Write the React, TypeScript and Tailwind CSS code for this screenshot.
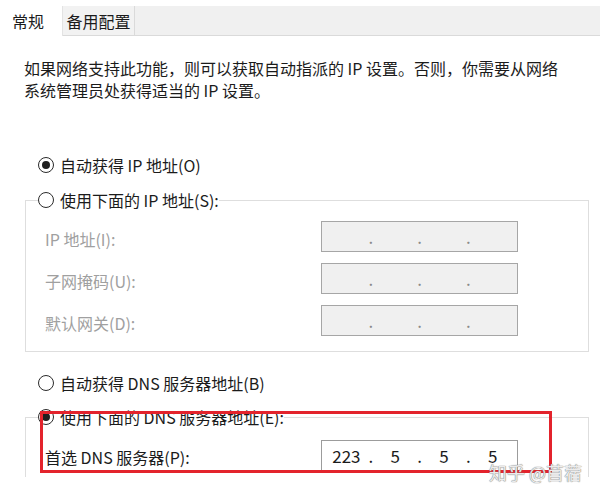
import React, { Fragment } from "react";

function Radio({ checked }: { checked?: boolean }) {
  return (
    <span className="w-[16px] h-[16px] rounded-full border border-[#2b2b2b] flex items-center justify-center bg-white shrink-0">
      {checked && <span className="w-[8px] h-[8px] rounded-full bg-[#1f1f1f]" />}
    </span>
  );
}

function RadioRow({ checked, label }: { checked?: boolean; label: string }) {
  return (
    <div className="flex items-center gap-[6px] h-[24px] text-[16px] leading-[24px] text-[#1b1b1b] bg-white">
      <Radio checked={checked} />
      <span>{label}</span>
    </div>
  );
}

function IpBox({ values, disabled }: { values?: string[]; disabled?: boolean }) {
  const segs = values ?? ["", "", "", ""];
  return (
    <div
      className={
        disabled
          ? "w-[197px] h-[31px] border border-[#a6a6a6] bg-[#f0f0f0] flex items-center text-[17px] text-[#8a8a8a]"
          : "w-[197px] h-[31px] border border-[#9c9c9c] bg-white flex items-center text-[17px] text-[#1b1b1b]"
      }
    >
      {segs.map((v, i) => (
        <Fragment key={i}>
          <span className="flex-1 text-center">{v}</span>
          {i < 3 && <span className="w-0 flex justify-center">.</span>}
        </Fragment>
      ))}
    </div>
  );
}

function FieldRow({ label, disabled, values }: { label: string; disabled?: boolean; values?: string[] }) {
  return (
    <div className="flex items-center h-[31px]">
      <span
        className={
          disabled
            ? "w-[276px] text-[16px] leading-[24px] text-[#a0a0a0] pt-[4px]"
            : "w-[276px] text-[16px] leading-[24px] text-[#1b1b1b] pt-[2px]"
        }
      >
        {label}
      </span>
      <IpBox disabled={disabled} values={values} />
    </div>
  );
}

export default function App() {
  return (
    <div className="relative w-[600px] h-[497px] bg-white overflow-hidden font-['Noto_Sans_CJK_SC','Noto_Sans',sans-serif]">
      {/* tabs */}
      <div className="pt-[6px]">
        <div className="flex h-[30px] text-[16px] text-[#1b1b1b]">
          <div className="w-[63px] bg-white border-r border-[#e3e3e3] pl-[12px] leading-[30px] pb-[3px]">常规</div>
          <div className="w-[72px] bg-[#f2f2f2] border-r border-b border-[#dadada] flex justify-center pt-[3px] leading-[24px]">
            备用配置
          </div>
          <div className="flex-1 bg-[#f0f0f0] border-b border-[#dadada]" />
        </div>
      </div>

      {/* description */}
      <div className="pt-[21px] pl-[24px] text-[16px] leading-[22px] text-[#1b1b1b]">
        <p>如果网络支持此功能，则可以获取自动指派的 IP 设置。否则，你需要从网络</p>
        <p>系统管理员处获得适当的 IP 设置。</p>
      </div>

      <div className="pl-[38px] mt-[52px]">
        <RadioRow checked label="自动获得 IP 地址(O)" />
      </div>

      <fieldset className="ml-[25px] mt-[11px] w-[564px] border border-[#dedede] pb-[15px]">
        <legend className="ml-[12px]">
          <RadioRow label="使用下面的 IP 地址(S):" />
        </legend>
        <div className="pl-[19px] pt-[9px] flex flex-col gap-[11px]">
          <FieldRow disabled label="IP 地址(I):" />
          <FieldRow disabled label="子网掩码(U):" />
          <FieldRow disabled label="默认网关(D):" />
        </div>
      </fieldset>

      <div className="pl-[38px] mt-[19px]">
        <RadioRow label="自动获得 DNS 服务器地址(B)" />
      </div>

      <fieldset className="ml-[25px] mt-[10px] w-[564px] border border-b-0 border-[#dedede] pb-[6px]">
        <legend className="ml-[12px]">
          <RadioRow checked label="使用下面的 DNS 服务器地址(E):" />
        </legend>
        <div className="pl-[19px] pt-[11px]">
          <FieldRow label="首选 DNS 服务器(P):" values={["223", "5", "5", "5"]} />
        </div>
      </fieldset>

      {/* red annotation */}
      <div className="absolute left-[40px] top-[411px] w-[512px] h-[62px] border-[3px] border-[#e3232c]" />

      {/* watermark */}
      <div className="absolute left-[489px] top-[461px] text-[18px] leading-[22px] text-[#ececec] [text-shadow:0_0_1px_#7d7d7d,0_0_1px_#7d7d7d] whitespace-nowrap">
        知乎 @苜蓿
      </div>
    </div>
  );
}
